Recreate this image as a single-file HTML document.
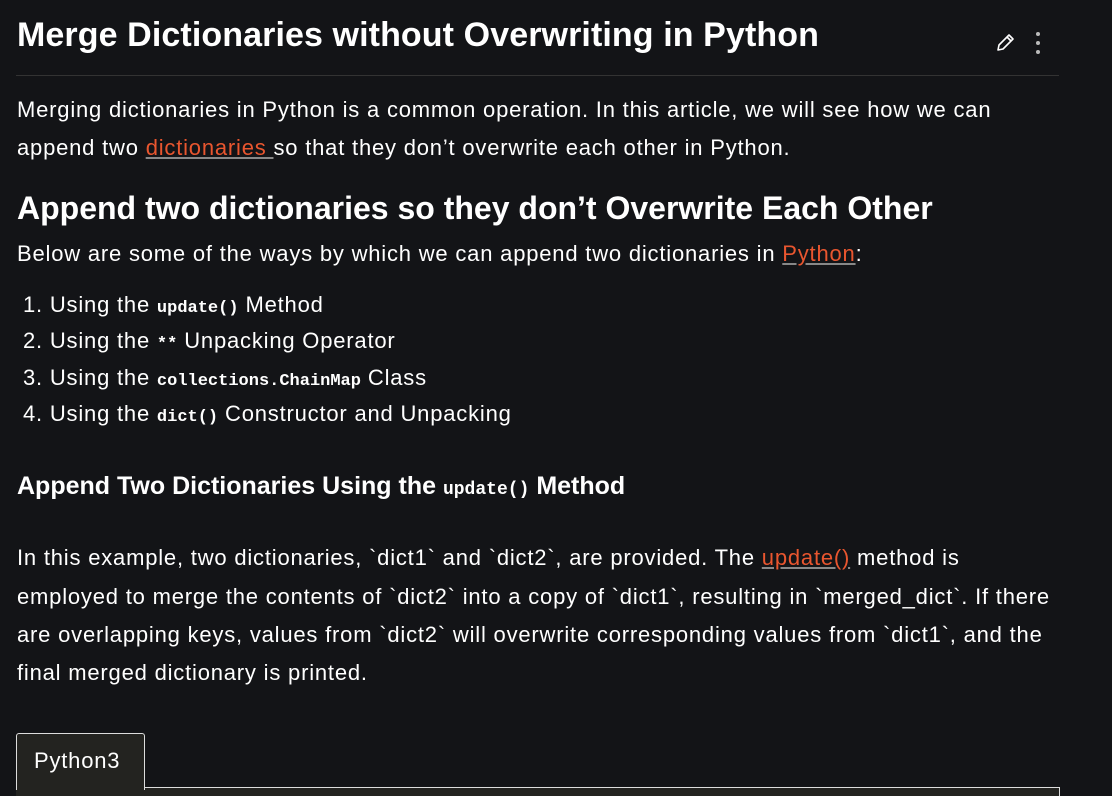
<!DOCTYPE html>
<html><head><meta charset="utf-8"><style>
html,body{margin:0;padding:0;background:#131417;width:1112px;height:796px;overflow:hidden}
body{font-family:"Liberation Sans",sans-serif;color:#fff;position:relative}
.l{position:absolute;white-space:nowrap;left:17px}
.p{font-size:22px;letter-spacing:0.8px}
a{color:#e9562f;text-decoration:underline;text-decoration-color:#888}
code{font-family:"Liberation Mono",monospace;font-size:17px;font-weight:bold;letter-spacing:0}
</style></head><body>
<div class="l" style="top:16px;font-size:34px;font-weight:bold;letter-spacing:0.1px">Merge Dictionaries without Overwriting in Python</div>
<svg style="position:absolute;left:994px;top:32px" width="22" height="22" viewBox="0 0 22 22"><path d="M4 18 L5 13 L15 3 L19 7 L9 17 Z M13 5 L17 9" fill="none" stroke="#fff" stroke-width="1.6" stroke-linejoin="round"/></svg>
<div style="position:absolute;left:1036px;top:32px;width:4px;height:4px;border-radius:2px;background:#bbb"></div>
<div style="position:absolute;left:1036px;top:41px;width:4px;height:4px;border-radius:2px;background:#bbb"></div>
<div style="position:absolute;left:1036px;top:50px;width:4px;height:4px;border-radius:2px;background:#bbb"></div>
<div style="position:absolute;left:16px;top:75px;width:1043px;height:1px;background:#333"></div>
<div class="l p" style="top:97px">Merging dictionaries in Python is a common operation. In this article, we will see how we can</div>
<div class="l p" style="top:135px">append two <a>dictionaries </a>so that they don’t overwrite each other in Python.</div>
<div class="l" style="top:190px;font-size:32px;font-weight:bold">Append two dictionaries so they don’t Overwrite Each Other</div>
<div class="l p" style="top:241px">Below are some of the ways by which we can append two dictionaries in <a>Python</a>:</div>
<div class="l p" style="top:292px;left:23px">1. Using the <code>update()</code> Method</div>
<div class="l p" style="top:328px;left:23px">2. Using the <code>**</code> Unpacking Operator</div>
<div class="l p" style="top:365px;left:23px">3. Using the <code>collections.ChainMap</code> Class</div>
<div class="l p" style="top:401px;left:23px">4. Using the <code>dict()</code> Constructor and Unpacking</div>
<div class="l" style="top:472px;font-size:25px;font-weight:bold">Append Two Dictionaries Using the <code style="font-size:18px">update()</code> Method</div>
<div class="l p" style="top:545px">In this example, two dictionaries, `dict1` and `dict2`, are provided. The <a>update()</a> method is</div>
<div class="l p" style="top:584px">employed to merge the contents of `dict2` into a copy of `dict1`, resulting in `merged_dict`. If there</div>
<div class="l p" style="top:622px">are overlapping keys, values from `dict2` will overwrite corresponding values from `dict1`, and the</div>
<div class="l p" style="top:660px">final merged dictionary is printed.</div>
<div style="position:absolute;left:16px;top:787px;width:1043px;height:9px;background:#232320;border-top:1px solid #ddd;border-right:1px solid #ddd"></div>
<div style="position:absolute;left:16px;top:733px;width:127px;height:56px;background:#232320;border:1px solid #ddd;border-bottom:none;border-radius:3px 3px 0 0"></div>
<div class="l p" style="top:748px;left:34px">Python3</div>
</body></html>
